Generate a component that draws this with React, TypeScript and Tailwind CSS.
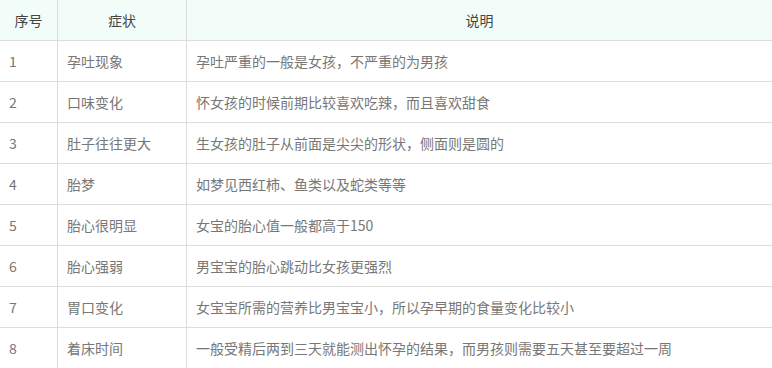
const rows = [
  ["1", "孕吐现象", "孕吐严重的一般是女孩，不严重的为男孩"],
  ["2", "口味变化", "怀女孩的时候前期比较喜欢吃辣，而且喜欢甜食"],
  ["3", "肚子往往更大", "生女孩的肚子从前面是尖尖的形状，侧面则是圆的"],
  ["4", "胎梦", "如梦见西红柿、鱼类以及蛇类等等"],
  ["5", "胎心很明显", "女宝的胎心值一般都高于150"],
  ["6", "胎心强弱", "男宝宝的胎心跳动比女孩更强烈"],
  ["7", "胃口变化", "女宝宝所需的营养比男宝宝小，所以孕早期的食量变化比较小"],
  ["8", "着床时间", "一般受精后两到三天就能测出怀孕的结果，而男孩则需要五天甚至要超过一周"],
]

export default function App() {
  return (
    <div
      className="w-[772px] h-[368px] overflow-hidden bg-white text-[14px]"
      style={{ fontFamily: '"Microsoft YaHei", "Noto Sans CJK SC", sans-serif' }}
    >
      <div className="flex h-[41px] border-b border-[#dddddd] bg-[#f2fcf8] text-[#444444]">
        <div className="w-[58px] flex items-center justify-center border-r border-[#dddddd]">序号</div>
        <div className="w-[129px] flex items-center justify-center border-r border-[#dddddd]">症状</div>
        <div className="flex-1 flex items-center justify-center">说明</div>
      </div>
      {rows.map(([no, name, desc]) => (
        <div key={no} className="flex h-[41px] border-b border-[#dddddd] text-[#777777]">
          <div className="w-[58px] flex items-center pl-[9px] border-r border-[#dddddd]">{no}</div>
          <div className="w-[129px] flex items-center pl-[9px] border-r border-[#dddddd]">{name}</div>
          <div className="flex-1 flex items-center pl-[9px]">{desc}</div>
        </div>
      ))}
    </div>
  )
}
